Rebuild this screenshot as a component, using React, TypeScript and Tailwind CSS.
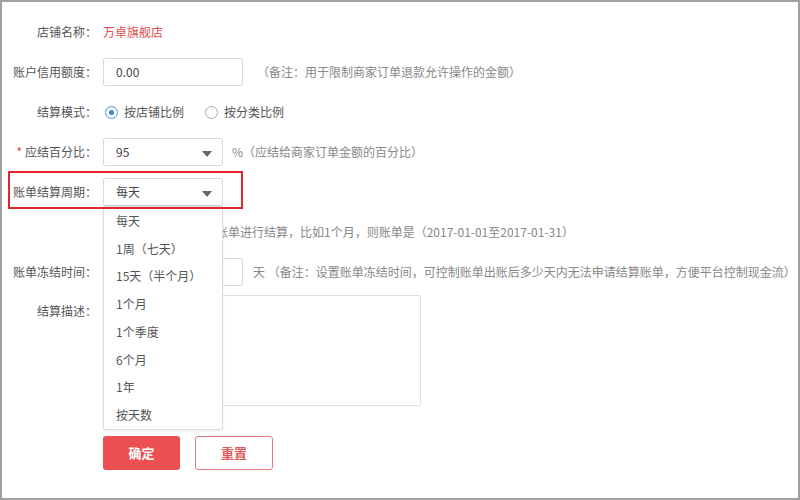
import type { ReactNode } from 'react';

const periods = ['每天', '1周（七天）', '15天（半个月）', '1个月', '1个季度', '6个月', '1年', '按天数'];

function Row({ label, required, children }: { label: string; required?: boolean; children?: ReactNode }) {
  return (
    <div className="flex h-[40px] items-center">
      <div className="w-[95px] shrink-0 text-right">
        {required && <span className="mr-[3px] text-[#e4393c]">*</span>}
        {label}
      </div>
      <div className="ml-[6px] flex items-center">{children}</div>
    </div>
  );
}

function Arrow() {
  return (
    <svg width="10" height="6" viewBox="0 0 10 6" className="absolute right-[10px] top-[12px]">
      <path d="M0 0 L10 0 L5 6 Z" fill="#666" />
    </svg>
  );
}

function Radio({ checked, label }: { checked?: boolean; label: string }) {
  return (
    <label className="flex items-center">
      <span
        className={
          checked
            ? 'flex h-[13px] w-[13px] items-center justify-center rounded-full border border-[#4a8fd8]'
            : 'flex h-[13px] w-[13px] items-center justify-center rounded-full border border-[#aaa]'
        }
      >
        {checked && <span className="h-[5px] w-[5px] rounded-full bg-[#3b86d6]" />}
      </span>
      <span className="ml-[6px]">{label}</span>
    </label>
  );
}

export default function App() {
  return (
    <div
      className="h-[500px] w-[800px] overflow-hidden border-2 border-[#a0a0a0] bg-white text-[12px] text-[#555]"
      style={{ fontFamily: '"Noto Sans CJK SC", "Noto Sans", sans-serif' }}
    >
      <div className="pt-[10px]">
        <Row label="店铺名称：">
          <span className="text-[#e24b4b]">万卓旗舰店</span>
        </Row>

        <Row label="账户信用额度：">
          <div className="flex h-[28px] w-[140px] items-center rounded-[2px] border border-[#d9d9d9] px-[12px] text-[#444]">
            0.00
          </div>
          <span className="ml-[14px] text-[#888]">（备注：用于限制商家订单退款允许操作的金额）</span>
        </Row>

        <Row label="结算模式：">
          <div className="flex items-center gap-[21px] pl-[2px]">
            <Radio checked label="按店铺比例" />
            <Radio label="按分类比例" />
          </div>
        </Row>

        <Row label="应结百分比：" required>
          <div className="relative flex h-[28px] w-[120px] items-center rounded-[2px] border border-[#d9d9d9] px-[12px] text-[#444]">
            95
            <Arrow />
          </div>
          <span className="ml-[9px] text-[#888]">%（应结给商家订单金额的百分比）</span>
        </Row>

        <div className="relative">
          <Row label="账单结算周期：">
            <div className="relative z-10 flex h-[28px] w-[120px] items-center rounded-[2px] border border-[#d9d9d9] bg-white px-[12px] text-[#444]">
              每天
              <Arrow />
              <div className="absolute left-[-1px] top-[27px] w-[120px] rounded-b-[2px] border border-[#ddd] bg-white shadow-[0_1px_3px_rgba(0,0,0,0.08)]">
                {periods.map((p) => (
                  <div key={p} className="flex h-[27.75px] items-center px-[12px] text-[#555]">
                    {p}
                  </div>
                ))}
              </div>
            </div>
          </Row>
          <div className="pointer-events-none absolute left-[6px] top-[-1px] z-20 h-[38px] w-[235px] border-2 border-[#e3242b]" />
        </div>

        <Row label="">
          <span className="ml-[113px] text-[#888]">账单进行结算，比如1个月，则账单是（2017-01-01至2017-01-31）</span>
        </Row>

        <Row label="账单冻结时间：">
          <div className="h-[28px] w-[140px] rounded-[2px] border border-[#d9d9d9]" />
          <span className="ml-[10px] whitespace-nowrap text-[#888]">
            天 （备注：设置账单冻结时间，可控制账单出账后多少天内无法申请结算账单，方便平台控制现金流）
          </span>
        </Row>

        <div className="mt-[3px] flex">
          <div className="w-[95px] shrink-0 pt-[7px] text-right">结算描述：</div>
          <div className="ml-[6px] h-[111px] w-[318px] rounded-[2px] border border-[#ddd]" />
        </div>

        <div className="ml-[101px] mt-[30px] flex gap-[15px]">
          <button className="h-[34px] w-[77px] rounded-[3px] bg-[#ec4f51] text-[13px] font-bold text-white">
            确定
          </button>
          <button className="h-[34px] w-[78px] rounded-[3px] border border-[#e07a7c] bg-white text-[13px] font-bold text-[#e0595b]">
            重置
          </button>
        </div>
      </div>
    </div>
  );
}
